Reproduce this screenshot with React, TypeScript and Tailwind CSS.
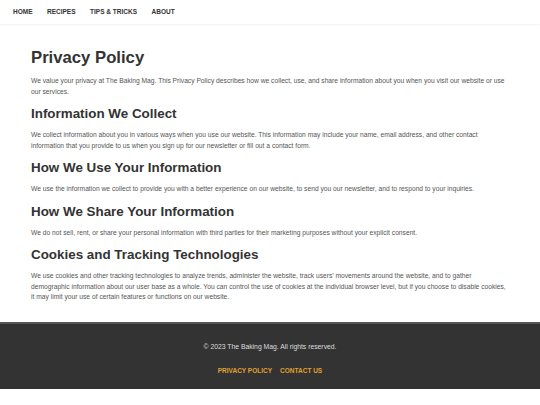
const sections = [
  {
    title: "Information We Collect",
    body: "We collect information about you in various ways when you use our website. This information may include your name, email address, and other contact information that you provide to us when you sign up for our newsletter or fill out a contact form.",
  },
  {
    title: "How We Use Your Information",
    body: "We use the information we collect to provide you with a better experience on our website, to send you our newsletter, and to respond to your inquiries.",
  },
  {
    title: "How We Share Your Information",
    body: "We do not sell, rent, or share your personal information with third parties for their marketing purposes without your explicit consent.",
  },
  {
    title: "Cookies and Tracking Technologies",
    body: "We use cookies and other tracking technologies to analyze trends, administer the website, track users’ movements around the website, and to gather demographic information about our user base as a whole. You can control the use of cookies at the individual browser level, but if you choose to disable cookies, it may limit your use of certain features or functions on our website.",
  },
];

const navItems = ["Home", "Recipes", "Tips & Tricks", "About"];

export default function App() {
  return (
    <div className="bg-white font-['Liberation_Sans',Arial,sans-serif] text-[#333]">
      {/* Top navigation */}
      <header className="h-6 bg-white shadow-[0_1px_2px_rgba(0,0,0,0.06)]">
        <nav className="flex h-full items-center gap-[14.5px] px-[13px]">
          {navItems.map((item) => (
            <a
              key={item}
              href="#"
              className="text-[6.5px] font-bold uppercase text-[#333]"
            >
              {item}
            </a>
          ))}
        </nav>
      </header>

      <main className="px-[31px] pb-[19px] pt-[24px]">
        <h1 className="text-[16.7px] font-bold leading-[20px] text-[#333]">Privacy Policy</h1>
        <p className="mt-[8px] text-[6.7px] leading-[10.5px] text-[#555]">
          We value your privacy at The Baking Mag. This Privacy Policy describes how we collect, use,
          and share information about you when you visit our website or use our services.
        </p>

        {sections.map((s) => (
          <section key={s.title}>
            <h2 className="mt-[9px] text-[13.4px] font-bold leading-[16px] text-[#333]">{s.title}</h2>
            <p className="mt-[8px] text-[6.7px] leading-[10.5px] text-[#555]">{s.body}</p>
          </section>
        ))}
      </main>

      <footer className="border-t-2 border-[#555] bg-[#333] pb-[13px] pt-[18px] text-center">
        <p className="text-[6.8px] leading-[10px] text-[#ddd]">© 2023 The Baking Mag. All rights reserved.</p>
        <div className="mt-[14px] flex justify-center gap-[8px] leading-[10px]">
          <a href="#" className="text-[6.5px] font-bold uppercase text-[#e0a030]">
            Privacy Policy
          </a>
          <a href="#" className="text-[6.5px] font-bold uppercase text-[#e0a030]">
            Contact Us
          </a>
        </div>
      </footer>
    </div>
  );
}
